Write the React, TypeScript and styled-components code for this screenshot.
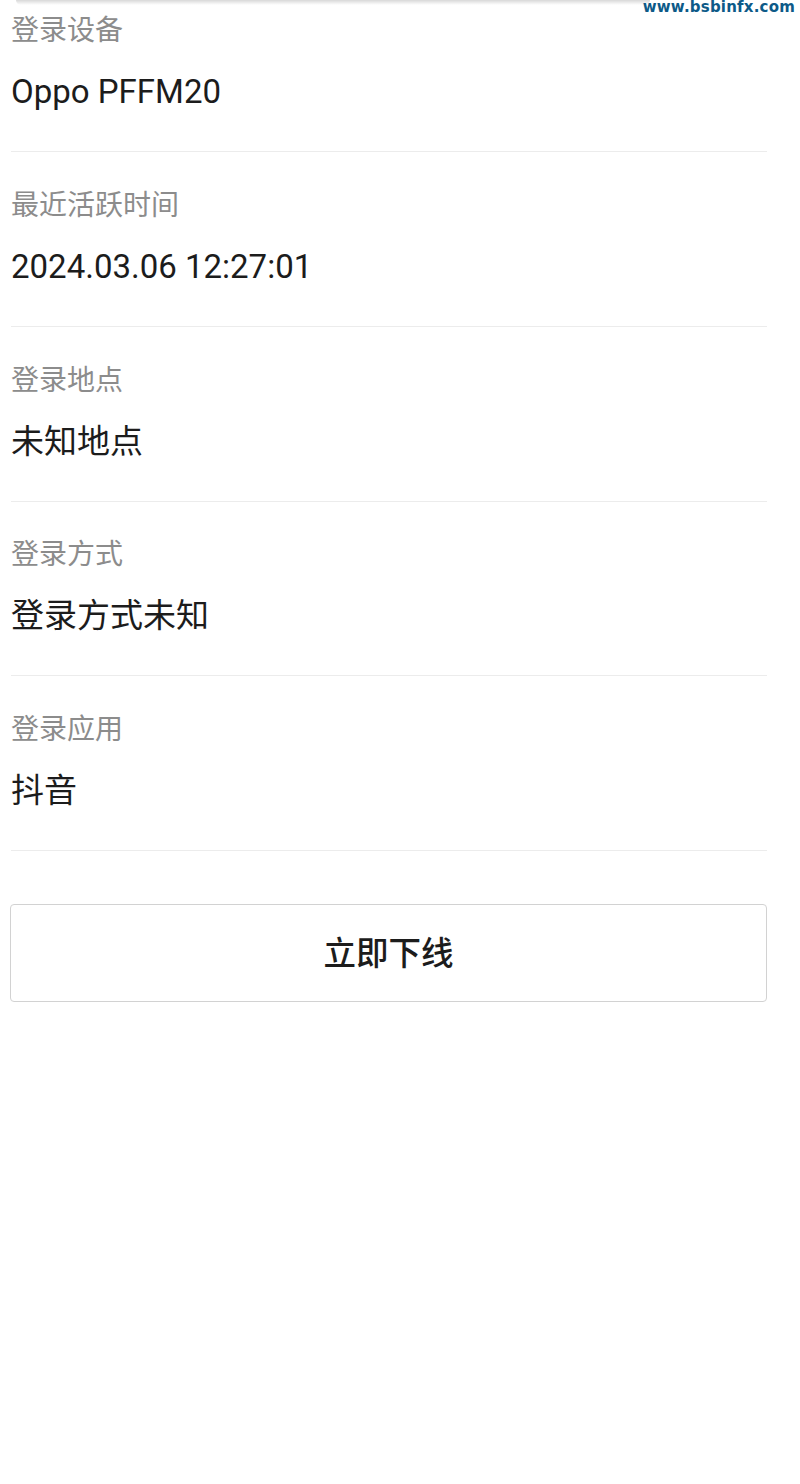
import React from 'react'
import styled, { createGlobalStyle } from 'styled-components'

const GlobalStyle = createGlobalStyle`
  body {
    margin: 0;
    background: #ffffff;
    font-family: Roboto, "Noto Sans CJK SC", sans-serif;
  }
`

const Page = styled.div`
  position: relative;
  width: 800px;
  min-height: 1484px;
  background: #ffffff;
`

const TopShade = styled.div`
  height: 5px;
  margin: 0 150px 0 16px;
  border-radius: 0 0 12px 12px;
  background: linear-gradient(#d8d8d8, #f4f4f4 70%, #ffffff);
`

const Watermark = styled.div`
  position: absolute;
  top: -2px;
  right: 5px;
  font-family: "DejaVu Sans", sans-serif;
  font-weight: 700;
  font-size: 15px;
  letter-spacing: 0.2px;
  color: #0d5a88;
`

const List = styled.div`
  display: flex;
  flex-direction: column;
  width: 756px;
  margin-left: 11px;
`

const Section = styled.div<{ $first?: boolean }>`
  display: flex;
  flex-direction: column;
  gap: 19px;
  padding: ${p => (p.$first ? '6px' : '33.75px')} 0 37px;
  border-bottom: 1px solid #ececec;
`

const Label = styled.div`
  font-size: 28px;
  line-height: 40px;
  color: #8c8c8c;
`

const Value = styled.div`
  font-size: 33px;
  line-height: 44px;
  color: #1c1c1c;
`

const OfflineButton = styled.button`
  display: flex;
  align-items: center;
  justify-content: center;
  width: 757px;
  height: 98px;
  margin: 53px 0 0 10px;
  padding: 0 0 6px;
  background: #ffffff;
  border: 1px solid #d2d2d2;
  border-radius: 4px;
  font-family: Roboto, "Noto Sans CJK SC", sans-serif;
  font-size: 32.5px;
  font-weight: 500;
  color: #1c1c1c;
  cursor: pointer;
`

const items = [
  { label: '登录设备', value: 'Oppo PFFM20' },
  { label: '最近活跃时间', value: '2024.03.06 12:27:01' },
  { label: '登录地点', value: '未知地点' },
  { label: '登录方式', value: '登录方式未知' },
  { label: '登录应用', value: '抖音' }
]

const App: React.FC = () => {
  return (
    <Page>
      <GlobalStyle />
      <TopShade />
      <Watermark>www.bsbinfx.com</Watermark>
      <List>
        {items.map((item, i) => (
          <Section key={item.label} $first={i === 0}>
            <Label>{item.label}</Label>
            <Value>{item.value}</Value>
          </Section>
        ))}
      </List>
      <OfflineButton>立即下线</OfflineButton>
    </Page>
  )
}

export default App
